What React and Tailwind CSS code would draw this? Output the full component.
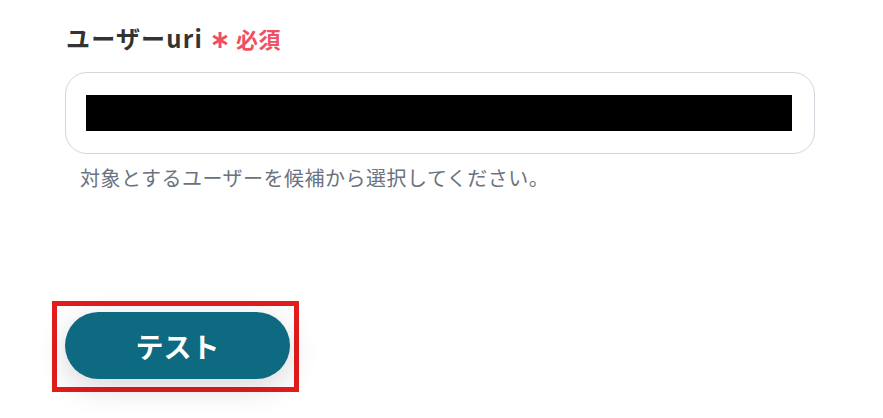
export default function App() {
  return (
    <div
      className="min-h-screen w-[883px] h-[418px] bg-white overflow-hidden"
      style={{ fontFamily: '"Noto Sans CJK JP", "Noto Sans", sans-serif' }}
    >
      <div className="pl-[65px] pr-[68px] pt-[20px]">
        {/* ラベル */}
        <div className="flex items-center h-[36px] pl-[1px]">
          <span className="text-[24px] font-bold text-[#333333] tracking-[1.2px]">ユーザーuri</span>
          <svg className="ml-[9px] mt-[4px]" width="16" height="16" viewBox="0 0 16 16" aria-label="*">
            <g stroke="#f0505f" strokeWidth="3" strokeLinecap="butt">
              <line x1="8" y1="0" x2="8" y2="16" />
              <line x1="1.1" y1="4" x2="14.9" y2="12" />
              <line x1="1.1" y1="12" x2="14.9" y2="4" />
            </g>
          </svg>
          <span className="ml-[8px] text-[22px] font-bold text-[#f0505f] tracking-[0.5px]">必須</span>
        </div>

        {/* 入力欄 */}
        <div className="mt-[16px] h-[82px] rounded-[22px] border border-[#d3d6dc] pl-[20px] pr-[22px] flex items-center">
          <div className="w-full h-[36px] bg-black" />
        </div>

        <p className="mt-[9px] pl-[15px] text-[20px] text-[#6b7280] tracking-[0.5px]">
          対象とするユーザーを候補から選択してください。
        </p>
      </div>

      {/* テストボタン */}
      <div className="mt-[108px] ml-[52px] w-[247px] h-[91px] border-[5px] border-[#e31c1c] pl-[8px] pt-[6px]">
        <button className="w-[225px] h-[67px] rounded-full bg-[#0d6a81] text-white text-[28px] font-bold shadow-[0_8px_30px_rgba(0,0,0,0.16)]">
          テスト
        </button>
      </div>
    </div>
  );
}
